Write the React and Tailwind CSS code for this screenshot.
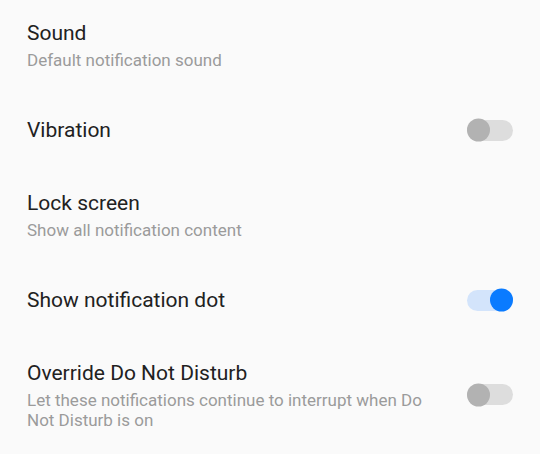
import React, { useState } from 'react'

const Toggle = ({ on, onChange }) => {
  return (
    <button
      onClick={onChange}
      className={`relative w-[46px] h-[21px] rounded-full flex-shrink-0 ${on ? 'bg-[#d3e4fb]' : 'bg-[#dddddd]'}`}
    >
      <span
        className={`absolute top-1/2 -translate-y-1/2 w-[23px] h-[23px] rounded-full ${on ? 'right-0 bg-[#0a7bff]' : 'left-0 bg-[#b2b2b2]'}`}
      />
    </button>
  )
}

const App = () => {
  const [settings, setSettings] = useState({ vibration: false, dot: true, dnd: false })

  const flip = (key) => setSettings({ ...settings, [key]: !settings[key] })

  const rows = [
    { title: 'Sound', sub: 'Default notification sound' },
    { title: 'Vibration', key: 'vibration' },
    { title: 'Lock screen', sub: 'Show all notification content' },
    { title: 'Show notification dot', key: 'dot' },
    { title: 'Override Do Not Disturb', sub: 'Let these notifications continue to interrupt when Do Not Disturb is on', key: 'dnd' },
  ]

  return (
    <div className="w-[540px] h-[454px] bg-[#fafafa] font-['Roboto',sans-serif] overflow-hidden">
      {rows.map((row) => (
        <div
          key={row.title}
          className={`flex items-center pl-[27px] pr-[27px] ${row.sub ? 'pt-[19px] pb-[20px]' : 'h-[80px]'}`}
        >
          <div className="flex-1 pr-[30px]">
            <div className="text-[21px] leading-[28px] text-[#212121]">{row.title}</div>
            {row.sub && (
              <div className="mt-[3px] text-[17px] leading-[20px] text-[#9b9b9b] max-w-[400px]">{row.sub}</div>
            )}
          </div>
          {row.key && <Toggle on={settings[row.key]} onChange={() => flip(row.key)} />}
        </div>
      ))}
    </div>
  )
}

export default App
